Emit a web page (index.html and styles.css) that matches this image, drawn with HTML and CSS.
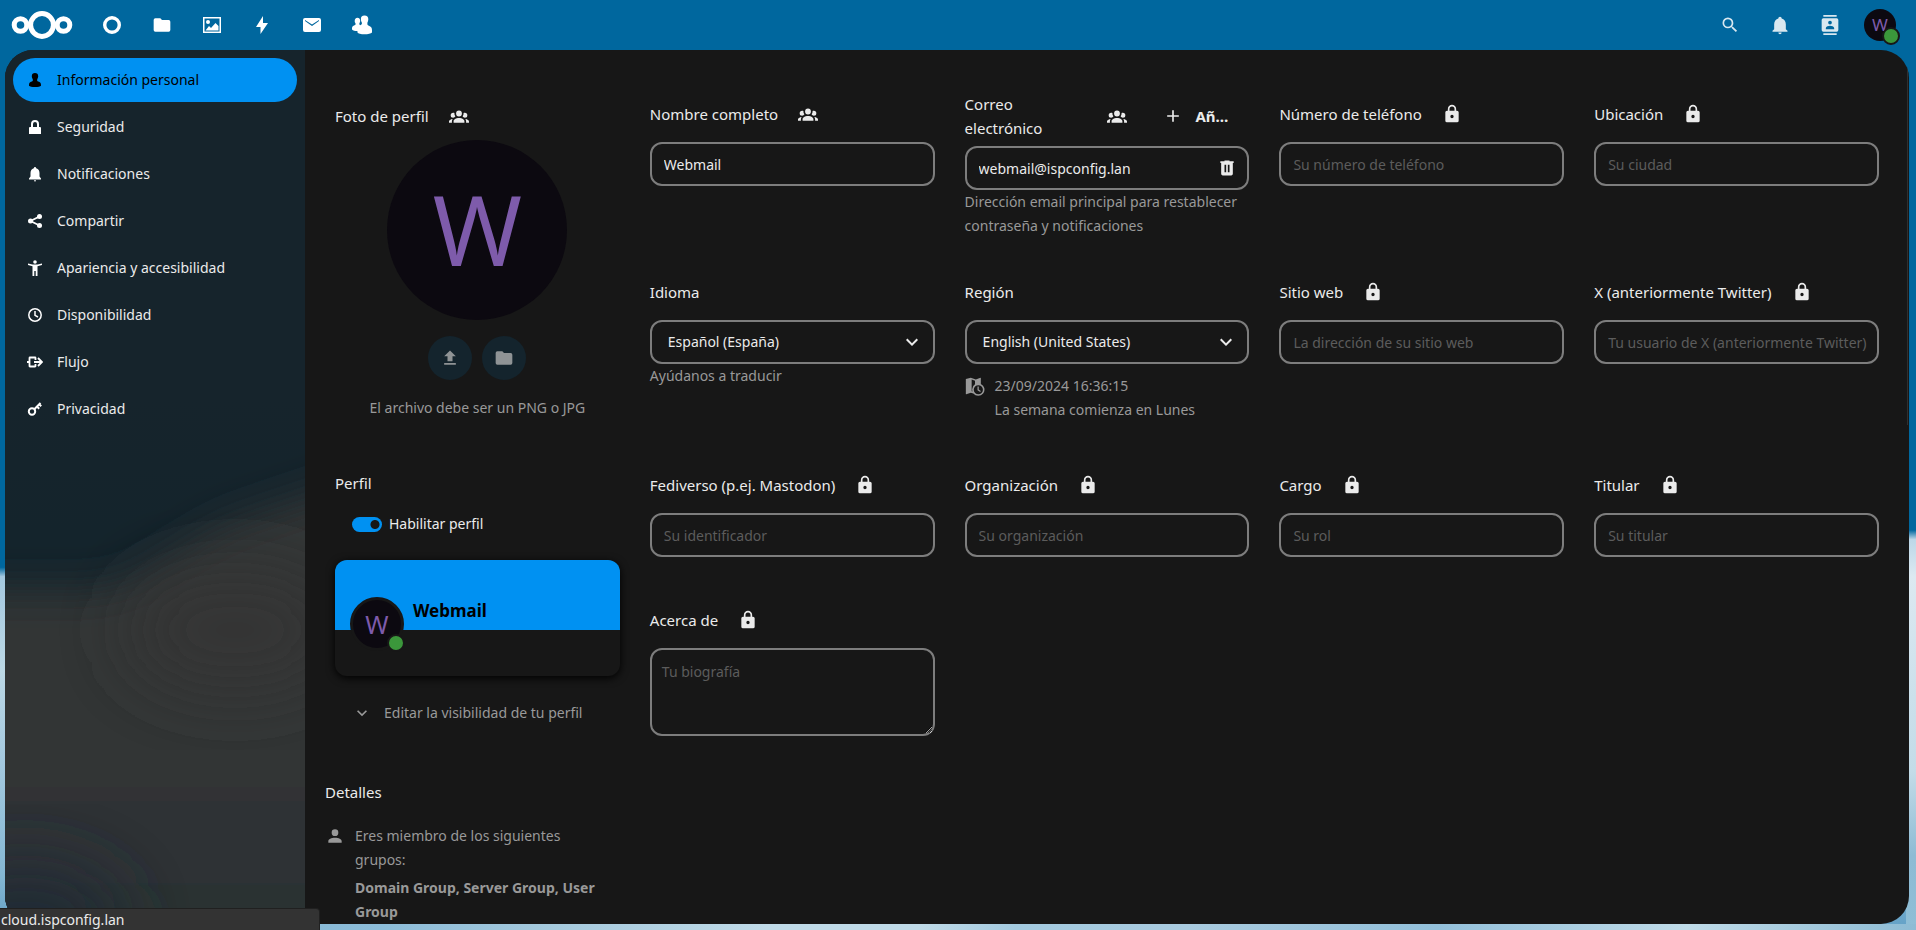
FILE: index.html
```html
<!DOCTYPE html>
<html lang="es">
<head>
<meta charset="utf-8">
<meta name="viewport" content="width=device-width, initial-scale=1">
<title>Información personal - Configuración</title>
<link rel="stylesheet" href="styles.css">
</head>
<body>
<svg class="sprite" aria-hidden="true">
  <symbol id="i-folder" viewBox="0 0 24 24"><path d="M10 4H4a2 2 0 0 0-2 2v12a2 2 0 0 0 2 2h16a2 2 0 0 0 2-2V8a2 2 0 0 0-2-2h-8z"/></symbol>
  <symbol id="i-group" viewBox="0 0 24 24"><path d="M12 5.500A3.500 3.500 0 0 1 15.500 9 3.500 3.500 0 0 1 12 12.500 3.500 3.500 0 0 1 8.500 9 3.500 3.500 0 0 1 12 5.500M5 8c.56 0 1.080.15 1.530.42-.15 1.430.27 2.850 1.130 3.960C7.160 13.340 6.160 14 5 14a3 3 0 0 1-3-3 3 3 0 0 1 3-3m14 0a3 3 0 0 1 3 3 3 3 0 0 1-3 3c-1.160 0-2.160-.66-2.660-1.620.86-1.110 1.280-2.530 1.130-3.960C17.920 8.150 18.440 8 19 8M5.500 18.250c0-2.070 2.910-3.750 6.500-3.750s6.500 1.680 6.500 3.750V20h-13zM0 20v-1.500c0-1.390 1.890-2.560 4.450-2.900-.59.68-.95 1.620-.95 2.650V20zm24 0h-3.500v-1.750c0-1.030-.36-1.970-.95-2.650 2.560.34 4.450 1.510 4.450 2.900z"/></symbol>
  <symbol id="i-lock" viewBox="0 0 24 24"><path d="M12 17a2 2 0 0 0 2-2 2 2 0 0 0-2-2 2 2 0 0 0-2 2 2 2 0 0 0 2 2m6-9a2 2 0 0 1 2 2v10a2 2 0 0 1-2 2H6a2 2 0 0 1-2-2V10a2 2 0 0 1 2-2h1V6a5 5 0 0 1 5-5 5 5 0 0 1 5 5v2zm-6-5a3 3 0 0 0-3 3v2h6V6a3 3 0 0 0-3-3"/></symbol>
  <symbol id="i-chevron" viewBox="0 0 24 24"><path d="M7.410 8.580 12 13.170l4.590-4.590L18 10l-6 6-6-6z"/></symbol>
  <symbol id="i-bell" viewBox="0 0 24 24"><path d="M21 19v1H3v-1l2-2v-6c0-3.100 2.030-5.830 5-6.710V4a2 2 0 0 1 4 0v.29c2.970.88 5 3.610 5 6.710v6zm-7 2a2 2 0 0 1-4 0"/></symbol>
</svg>

<header class="header">
  <a class="logo" href="#" aria-label="Nextcloud">
    <svg width="62" height="30" viewBox="0 0 62 30" fill="none" stroke="#fff" stroke-width="5"><circle cx="9.500" cy="15" r="6.300"/><circle cx="31" cy="15" r="11.400"/><circle cx="52.500" cy="15" r="6.300"/></svg>
  </a>
  <nav class="apps" aria-label="Aplicaciones">
    <a href="#" aria-label="Panel"><svg width="20" height="20" viewBox="0 0 20 20"><circle cx="10" cy="10" r="7.300" fill="none" stroke="#fff" stroke-width="3.400"/></svg></a>
    <a href="#" aria-label="Archivos"><svg width="20" height="20"><use href="#i-folder"/></svg></a>
    <a href="#" aria-label="Fotos"><svg width="20" height="20" viewBox="0 0 20 20"><path fill-rule="evenodd" d="M1 2h18v16H1zM2.500 3.500v13h15v-13zM3.500 15.500 7 11l2 2 4.500-5 3 3v4.500zM6 5a2 2 0 1 1 0 4 2 2 0 0 1 0-4"/></svg></a>
    <a href="#" aria-label="Actividad"><svg width="20" height="20" viewBox="0 0 20 20"><path d="M11 1 4 12h4.500v7L16 8h-5z"/></svg></a>
    <a href="#" aria-label="Correo"><svg width="20" height="20" viewBox="0 0 20 20"><path fill-rule="evenodd" d="M3 3h14q2 0 2 2v10q0 2-2 2H3q-2 0-2-2V5q0-2 2-2m0 2v1l7 5 7-5V5l-7 4.500z"/></svg></a>
    <a href="#" aria-label="Contactos"><svg width="20" height="20" viewBox="0 0 20 20"><path d="M12.500.5c2.500 0 4 1.500 3.800 4-.2 2-.8 2.500-.9 3.500-.1 1.500 0 2 1.500 2.700 2 .9 3.100 2 3.100 4.300v2.500c-1 1-4 1.800-7.500 1.800S6 18.500 5.500 17.500L5.400 16C3 16 1 15.500 0 14.500V13c.2-1.500 1-2.200 2.500-2.700 1-.4 1.200-.8 1.100-1.500-.1-.6-.8-1-.9-2.500C2.600 4 3.700 2.700 5.500 2.700c1.500 0 2.700 1.100 2.700 3 0 1.500-.8 2.300-.9 3-.1.600.2 1.200.9 1.500 1.500-.5 1.800-1 1.700-2.200-.1-1-.9-1.500-1-3.500C8.700 2 10 .5 12.500.5"/></svg></a>
  </nav>
  <div class="tools">
    <button type="button" aria-label="Buscar"><svg width="20" height="20" viewBox="0 0 24 24"><path d="M9.500 3A6.500 6.500 0 0 1 16 9.500c0 1.610-.59 3.090-1.560 4.230l.27.27h.79l5 5-1.500 1.500-5-5v-.79l-.27-.27A6.516 6.516 0 0 1 9.500 16 6.500 6.500 0 0 1 9.500 3m0 2C7 5 5 7 5 9.500S7 14 9.500 14 14 12 14 9.500 12 5 9.500 5"/></svg></button>
    <button type="button" aria-label="Notificaciones"><svg width="20" height="20"><use href="#i-bell"/></svg></button>
    <button type="button" aria-label="Buscar contactos"><svg width="20" height="20" viewBox="0 0 24 24"><path d="M20 0H4v2h16zM4 24h16v-2H4zM20 4H4a2 2 0 0 0-2 2v12a2 2 0 0 0 2 2h16a2 2 0 0 0 2-2V6a2 2 0 0 0-2-2m-8 2.750A2.250 2.250 0 0 1 14.250 9 2.250 2.250 0 0 1 12 11.250 2.250 2.250 0 0 1 9.750 9 2.250 2.250 0 0 1 12 6.750M17 17H7v-1.500c0-1.670 3.330-2.500 5-2.500s5 .83 5 2.500z"/></svg></button>
    <button type="button" aria-label="Menú de usuario"><span class="avatar avatar-small">W<span class="status"></span></span></button>
  </div>
</header>

<div class="app">
  <nav class="sidebar" aria-label="Configuración personal">
    <svg class="backdrop" viewBox="0 0 300 874" preserveAspectRatio="none" aria-hidden="true">
      <defs>
        <filter id="soft" x="-50%" y="-50%" width="200%" height="200%"><feGaussianBlur stdDeviation="20"/></filter>
        <filter id="softer" x="-50%" y="-50%" width="200%" height="200%"><feGaussianBlur stdDeviation="35"/></filter>
        <linearGradient id="cloud" x1="0" y1="0" x2="0" y2="1"><stop offset="0" stop-color="#343536"/><stop offset=".5" stop-color="#323536"/><stop offset=".85" stop-color="#2b3033"/><stop offset="1" stop-color="#293033"/></linearGradient>
      </defs>
      <path fill="url(#cloud)" filter="url(#soft)" d="M-80 540H90Q130 535 160 510L220 475 400 415V960H-80z"/>
      <ellipse cx="230" cy="580" rx="110" ry="60" fill="#363536" filter="url(#softer)"/>
      <ellipse cx="20" cy="874" rx="100" ry="60" fill="#242b34" filter="url(#softer)"/>
    </svg>
    <a class="entry active" href="#"><svg width="16" height="16" viewBox="0 0 16 16"><path d="M8 1c2 0 3.200 1.200 3.200 3.200 0 1.600-.7 2.200-1 3.300-.2 1 0 1.600 1 2C13.300 10.300 14 11 14 13v.8c-.7.800-3 1.200-6 1.200s-5.300-.4-6-1.200V13c0-2 .7-2.700 2.800-3.500 1-.4 1.200-1 1-2-.3-1.100-1-1.700-1-3.300C4.800 2.200 6 1 8 1"/></svg>Información personal</a>
    <a class="entry" href="#"><svg width="16" height="16" viewBox="0 0 16 16"><path fill-rule="evenodd" d="M8 1a4 4 0 0 0-4 4v3H3q-1 0-1 1v6h12V9q0-1-1-1h-1V5a4 4 0 0 0-4-4m0 2a2 2 0 0 1 2 2v3H6V5a2 2 0 0 1 2-2"/></svg>Seguridad</a>
    <a class="entry" href="#"><svg width="16" height="16" viewBox="0 0 16 16"><path d="M8 1q-1 0-1.200 1.300C4.500 3 3.500 4.800 3.500 7v3.500L2 12.500v1h12v-1l-1.500-2V7c0-2.200-1-4-3.300-4.700Q9 1 8 1M7 14.300h2q0 1.200-1 1.200t-1-1.200"/></svg>Notificaciones</a>
    <a class="entry" href="#"><svg width="16" height="16" viewBox="0 0 16 16"><path d="m12.500 3.500-9 4.500 9 4.500" fill="none" stroke="currentColor" stroke-width="1.800"/><circle cx="12.500" cy="3.500" r="2.500"/><circle cx="3.500" cy="8" r="2.500"/><circle cx="12.500" cy="12.500" r="2.500"/></svg>Compartir</a>
    <a class="entry" href="#"><svg width="16" height="16" viewBox="0 0 16 16"><circle cx="8" cy="2" r="1.800"/><path d="m1 3.500 4.500.9h5l4.500-.9v1.600l-4.500 1.100V16H8.700v-5H7.300v5H5.500V6.200L1 5.100z"/></svg>Apariencia y accesibilidad</a>
    <a class="entry" href="#"><svg width="16" height="16" viewBox="0 0 16 16" fill="none" stroke="currentColor" stroke-width="1.500"><circle cx="8" cy="8" r="6.200"/><path d="M8 4v4.300l3 1.700"/></svg>Disponibilidad</a>
    <a class="entry" href="#"><svg width="16" height="16" viewBox="0 0 16 16" fill="none" stroke="currentColor" stroke-width="1.800"><path d="M8.500 10v2q0 .5-.5.500H3q-.5 0-.5-.5V4q0-.5.5-.5h5q.5 0 .5.500v2M0 8h2.500M7 8h8M11 4l4 4-4 4"/></svg>Flujo</a>
    <a class="entry" href="#"><svg width="16" height="16" viewBox="0 0 16 16" fill="none" stroke="currentColor" stroke-width="2"><circle cx="5" cy="10.500" r="3.200"/><path d="m7.300 8.200 6.200-6.200M10 5.500l2.200 2.200M12.200 3.300l2 2"/></svg>Privacidad</a>
  </nav>

  <main class="content">
    <div class="side">
      <section class="photo">
        <h3 class="heading">Foto de perfil <button class="scope" type="button" aria-label="Visibilidad de la foto"><svg width="20" height="20"><use href="#i-group"/></svg></button></h3>
        <div class="avatar avatar-big">W</div>
        <div class="photo-actions">
          <button type="button" aria-label="Subir imagen"><svg width="20" height="20" viewBox="0 0 24 24"><path d="M9 16v-6H5l7-7 7 7h-4v6zm-4 4v-2h14v2z"/></svg></button>
          <button type="button" aria-label="Elegir de archivos"><svg width="20" height="20"><use href="#i-folder"/></svg></button>
        </div>
        <p class="muted">El archivo debe ser un PNG o JPG</p>
      </section>
      <section class="profile">
        <h3 class="heading">Perfil</h3>
        <label class="toggle"><input type="checkbox" role="switch" checked>Habilitar perfil</label>
        <a class="card" href="#">
          <span class="card-top">Webmail</span>
          <span class="avatar avatar-card">W<span class="status"></span></span>
        </a>
        <button class="edit" type="button"><svg width="20" height="20"><use href="#i-chevron"/></svg>Editar la visibilidad de tu perfil</button>
      </section>
      <section class="details">
        <h3>Detalles</h3>
        <div class="groups">
          <svg width="20" height="20" viewBox="0 0 24 24"><path d="M12 4a4 4 0 0 1 4 4 4 4 0 0 1-4 4 4 4 0 0 1-4-4 4 4 0 0 1 4-4m0 10c4.420 0 8 1.790 8 4v2H4v-2c0-2.210 3.580-4 8-4"/></svg>
          <div><p class="intro">Eres miembro de los siguientes grupos:</p><p class="names">Domain Group, Server Group, User Group</p></div>
        </div>
      </section>
    </div>

    <form class="fields">
      <div class="field">
        <div class="heading"><label for="name">Nombre completo</label><button class="scope" type="button" aria-label="Visibilidad"><svg width="20" height="20"><use href="#i-group"/></svg></button></div>
        <input id="name" type="text" value="Webmail">
      </div>
      <div class="field field-email">
        <div class="heading"><label for="email">Correo electrónico</label><button class="scope" type="button" aria-label="Visibilidad"><svg width="20" height="20"><use href="#i-group"/></svg></button><button class="add" type="button" aria-label="Añadir"><svg width="20" height="20" viewBox="0 0 24 24"><path d="M19 13h-6v6h-2v-6H5v-2h6V5h2v6h6z"/></svg>Añ…</button></div>
        <div class="stack"><input id="email" type="email" value="webmail@ispconfig.lan"><button class="scope" type="button" aria-label="Eliminar"><svg width="20" height="20" viewBox="0 0 24 24"><path fill-rule="evenodd" d="M9 3v1H4v2h1v13a2 2 0 0 0 2 2h10a2 2 0 0 0 2-2V6h1V4h-5V3zm0 5h2v9H9zm4 0h2v9h-2z"/></svg></button></div>
        <p class="muted">Dirección email principal para restablecer contraseña y notificaciones</p>
      </div>
      <div class="field">
        <div class="heading"><label for="phone">Número de teléfono</label><button class="scope" type="button" aria-label="Visibilidad"><svg width="20" height="20"><use href="#i-lock"/></svg></button></div>
        <input id="phone" type="tel" placeholder="Su número de teléfono">
      </div>
      <div class="field">
        <div class="heading"><label for="place">Ubicación</label><button class="scope" type="button" aria-label="Visibilidad"><svg width="20" height="20"><use href="#i-lock"/></svg></button></div>
        <input id="place" type="text" placeholder="Su ciudad">
      </div>

      <div class="field">
        <div class="heading"><label for="lang">Idioma</label></div>
        <div class="stack"><select id="lang"><option>Español (España)</option></select><svg class="caret" width="24" height="24"><use href="#i-chevron"/></svg></div>
        <a class="muted" href="#">Ayúdanos a traducir</a>
      </div>
      <div class="field">
        <div class="heading"><label for="region">Región</label></div>
        <div class="stack"><select id="region"><option>English (United States)</option></select><svg class="caret" width="24" height="24"><use href="#i-chevron"/></svg></div>
        <div class="example muted">
          <svg width="20" height="20" viewBox="0 0 24 24"><path fill-rule="evenodd" d="M1 3.500 7 2l6 2.200L18.500 2q.5 0 .5.500V9.500A7.500 7.500 0 1 1 10 21l-3-1-5.500 2q-.5 0-.5-.5zM8 4.300v13.900l1 .3A7.500 7.500 0 0 1 12 10V5.800zM16 11a5.500 5.500 0 1 0 0 11 5.500 5.500 0 0 0 0-11m-1 1.500h1.500v3.800l2.500 1.700-.8 1.200L15 17z"/></svg>
          <div><p>23/09/2024 16:36:15</p><p>La semana comienza en Lunes</p></div>
        </div>
      </div>
      <div class="field">
        <div class="heading"><label for="web">Sitio web</label><button class="scope" type="button" aria-label="Visibilidad"><svg width="20" height="20"><use href="#i-lock"/></svg></button></div>
        <input id="web" type="url" placeholder="La dirección de su sitio web">
      </div>
      <div class="field">
        <div class="heading"><label for="x">X (anteriormente Twitter)</label><button class="scope" type="button" aria-label="Visibilidad"><svg width="20" height="20"><use href="#i-lock"/></svg></button></div>
        <input id="x" type="text" placeholder="Tu usuario de X (anteriormente Twitter)">
      </div>

      <div class="field">
        <div class="heading"><label for="fedi">Fediverso (p.ej. Mastodon)</label><button class="scope" type="button" aria-label="Visibilidad"><svg width="20" height="20"><use href="#i-lock"/></svg></button></div>
        <input id="fedi" type="text" placeholder="Su identificador">
      </div>
      <div class="field">
        <div class="heading"><label for="org">Organización</label><button class="scope" type="button" aria-label="Visibilidad"><svg width="20" height="20"><use href="#i-lock"/></svg></button></div>
        <input id="org" type="text" placeholder="Su organización">
      </div>
      <div class="field">
        <div class="heading"><label for="role">Cargo</label><button class="scope" type="button" aria-label="Visibilidad"><svg width="20" height="20"><use href="#i-lock"/></svg></button></div>
        <input id="role" type="text" placeholder="Su rol">
      </div>
      <div class="field">
        <div class="heading"><label for="headline">Titular</label><button class="scope" type="button" aria-label="Visibilidad"><svg width="20" height="20"><use href="#i-lock"/></svg></button></div>
        <input id="headline" type="text" placeholder="Su titular">
      </div>

      <div class="field">
        <div class="heading"><label for="bio">Acerca de</label><button class="scope" type="button" aria-label="Visibilidad"><svg width="20" height="20"><use href="#i-lock"/></svg></button></div>
        <textarea id="bio" placeholder="Tu biografía"></textarea>
      </div>
    </form>
  </main>
</div>
<div class="link-status">cloud.ispconfig.lan</div>
</body>
</html>
```

FILE: styles.css
```css
:root {
  --primary: #0091f2;
  --bg: #171717;
  --text: #ebebeb;
  --muted: #999;
  --border: #7d7d7d;
  --avatar: #0c0910;
  --violet: #7e5bab;
}
*, *::before, *::after { box-sizing: border-box; }
html { height: 100%; }
body {
  margin: 0;
  height: 100%;
  display: flex;
  flex-direction: column;
  overflow: hidden;
  color: var(--text);
  font: 14px/24px "Noto Sans", "Open Sans", sans-serif;
  background:
    linear-gradient(to right, #7db1d0 0%, #8cbcd8 20%, #a3c8dc 28%, #c0dbe8 40%, #c0dbe8 48%, #a3cadf 53%, #a9cbdf 62%, #93c0da 75%, #bfdbe8 88%, #8dbbd4 100%) bottom / 100% 6px no-repeat,
    linear-gradient(#00679e 57%, #bcd7e8 58%, #dce9f1 62%, #cbe0eb 75%, #c3dce8 83%, #8dbbd4 92%, #8fbed6 100%) right / 10px 100% no-repeat,
    linear-gradient(#00679e 61%, #a4c8df 62%, #bcd8e5 72%, #a4c9df 82%, #85b7d3 94%, #62a0c6 100%);
}
h3, p { margin: 0; font-weight: 400; }
button, input, select, textarea { font: inherit; color: inherit; margin: 0; }
button { background: none; border: 0; padding: 0; cursor: pointer; }
a { color: inherit; text-decoration: none; }
svg { flex: none; display: block; }
svg:not([fill]) { fill: currentColor; }
.sprite { position: absolute; width: 0; height: 0; }

.header { flex: none; height: 50px; display: flex; align-items: center; color: #fff; padding: 0 11px; }
.logo { margin-right: 14px; }
.apps, .tools { display: flex; }
.apps a, .tools button { width: 50px; height: 50px; display: grid; place-items: center; }
.tools { margin-left: auto; color: #d9e8f0; }

.avatar {
  position: relative;
  display: grid;
  place-items: center;
  border-radius: 50%;
  background: var(--avatar);
  color: var(--violet);
}
.avatar-small { width: 32px; height: 32px; font-size: 17px; }
.avatar-big { width: 180px; height: 180px; font-size: 96px; line-height: 92px; align-self: center; margin-top: 2px; padding-bottom: 2px; }
.status {
  position: absolute;
  right: -4px;
  bottom: -4px;
  width: 18px;
  height: 18px;
  border: 2px solid var(--bg);
  border-radius: 50%;
  background: #3b973b;
}

.app {
  flex: 1;
  min-height: 0;
  margin: 0 7px 6px 5px;
  border-radius: 28px;
  overflow: hidden;
  display: flex;
  background: var(--bg);
}
.sidebar {
  position: relative;
  isolation: isolate;
  flex: none;
  width: 300px;
  padding: 8px;
  display: flex;
  flex-direction: column;
  gap: 3px;
  background: linear-gradient(#16242c 40%, #14242c 55%);
}
.backdrop { position: absolute; inset: 0; width: 100%; height: 100%; z-index: -1; }
.entry {
  height: 44px;
  display: flex;
  align-items: center;
  gap: 14px;
  padding: 0 14px;
  border-radius: 22px;
}
.entry svg { color: #fff; }
.active { background: var(--primary); color: #000; }
.active svg { color: #000; }

.content {
  position: relative;
  flex: 1;
  min-width: 0;
  display: grid;
  grid-template-columns: repeat(5, minmax(0, 1fr));
  column-gap: 30px;
  align-items: start;
  padding: 42px 30px 0;
}
.content::after {
  content: "";
  position: absolute;
  right: 1px;
  top: 8px;
  width: 1px;
  height: 42%;
  background: #303030;
}
.heading { display: flex; align-items: center; gap: 8px; min-height: 44px; font-size: 15px; }
.scope { flex: none; width: 44px; height: 44px; display: grid; place-items: center; }
.muted { color: var(--muted); }

.side { display: flex; flex-direction: column; padding-top: 2px; }
.photo, .profile { display: flex; flex-direction: column; }
.photo { margin-bottom: 41px; }
.photo .muted { margin-top: 16px; text-align: center; }
.photo-actions { display: flex; justify-content: center; gap: 10px; margin-top: 16px; }
.photo-actions button { width: 44px; height: 44px; border-radius: 50%; display: grid; place-items: center; background: #14242d; color: #8f9395; }
.toggle { display: flex; align-items: center; gap: 7px; height: 38px; padding-left: 17px; }
.toggle input {
  appearance: none;
  width: 30px;
  height: 15px;
  border-radius: 8px;
  background: radial-gradient(circle at 23px 50%, var(--bg) 4px, var(--primary) 5px);
}
.card {
  position: relative;
  height: 116px;
  margin-top: 17px;
  border-radius: 12px;
  overflow: hidden;
  box-shadow: 0 2px 9px #000;
}
.card-top { display: flex; align-items: center; height: 70px; padding: 32px 0 0 78px; background: var(--primary); color: #000; font-size: 17px; font-weight: 700; }
.avatar-card { position: absolute; left: 15px; top: 37px; width: 54px; height: 54px; border: 3px solid var(--bg); font-size: 25px; }
.edit { display: flex; align-items: center; gap: 12px; height: 44px; margin-top: 15px; padding-left: 17px; color: var(--muted); }
.details { margin: 45px 10px 0 -10px; }
.details h3 { font-size: 15px; }
.groups { display: flex; gap: 10px; margin-top: 20px; color: var(--muted); }
.groups svg { margin-top: 2px; }
.intro { padding-right: 10px; }
.names { font-weight: 700; margin-top: 4px; }

.fields { grid-column: 2 / -1; display: grid; grid-template-columns: repeat(4, minmax(0, 1fr)); gap: 30px; align-items: start; }
.field { display: flex; flex-direction: column; padding-bottom: 11px; }
.field-email { padding-bottom: 2px; }
.field .heading { margin-bottom: 6px; }
.field input, .field select, .field textarea {
  width: 100%;
  height: 44px;
  padding: 0 12px;
  border: 2px solid var(--border);
  border-radius: 12px;
  background: var(--bg);
  outline: 0;
}
.field input { padding-right: 6px; }
.field select { appearance: none; padding: 0 16px; }
.field textarea { height: 88px; padding: 10px; display: block; }
.field ::placeholder { color: #5c5c5c; opacity: 1; }
.stack { display: grid; align-items: center; justify-items: end; }
.stack > * { grid-area: 1 / 1; }
.caret { margin-right: 11px; pointer-events: none; }
.add { flex: none; display: flex; align-items: center; gap: 12px; width: 98px; height: 44px; margin-left: 4px; padding: 0 10px 0 12px; font-weight: 700; }
.field-email label { flex: 1; }
.example { display: flex; gap: 10px; }
.field > .example { margin-top: 10px; }
.example svg { margin-top: 2px; }

.link-status {
  position: fixed;
  left: 0;
  bottom: 0;
  width: 320px;
  height: 22px;
  padding-left: 1px;
  border: 1px solid #202020;
  border-width: 1px 1px 0 0;
  border-top-right-radius: 4px;
  background: #333;
  line-height: 22px;
}
```
